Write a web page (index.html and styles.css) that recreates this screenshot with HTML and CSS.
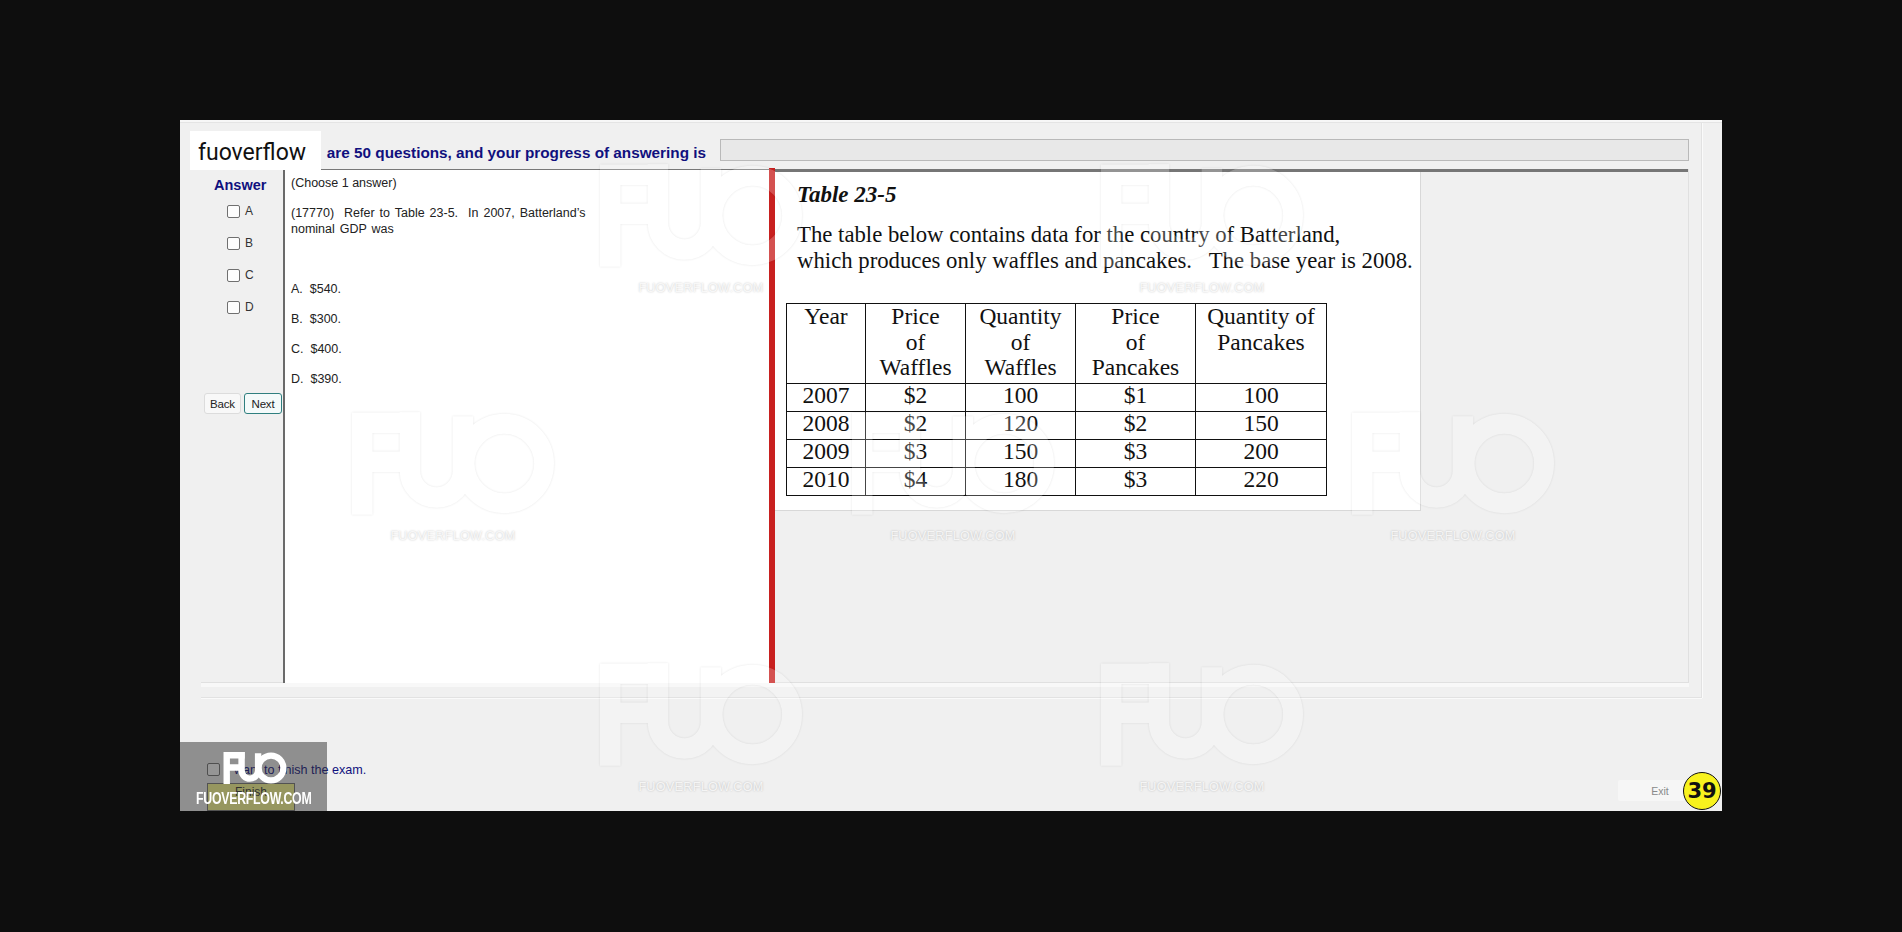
FILE: index.html
```html
<!DOCTYPE html>
<html lang="en">
<head>
<meta charset="utf-8">
<title>Exam</title>
<link rel="stylesheet" href="styles.css">
</head>
<body>
<svg class="defs" width="0" height="0" aria-hidden="true">
  <symbol id="fuo" viewBox="0 0 610 310">
    <g fill="none" stroke="currentColor" stroke-width="62">
      <path d="M31 310V32H205M31 150H175"/>
      <path d="M175 0V178A80 80 0 0 0 335 178V12"/>
      <circle cx="460" cy="155" r="120" stroke-width="60"/>
    </g>
  </symbol>
</svg>
<main class="window">
  <div class="topline"></div>
  <div class="group">
    <div class="progress-row">
      <span class="progress-label">are 50 questions, and your progress of answering is</span>
      <div class="progress-bar"></div>
    </div>
    <div class="main-row">
      <aside class="answers">
        <h2 class="answers-title">Answer</h2>
        <label class="choice"><input type="checkbox"><span>A</span></label>
        <label class="choice"><input type="checkbox"><span>B</span></label>
        <label class="choice"><input type="checkbox"><span>C</span></label>
        <label class="choice"><input type="checkbox"><span>D</span></label>
        <div class="nav">
          <button class="btn">Back</button>
          <button class="btn btn-next">Next</button>
        </div>
      </aside>
      <section class="question">
        <p class="hint">(Choose 1 answer)</p>
        <p class="stem">(17770)&nbsp; Refer to Table 23-5.&nbsp; In 2007, Batterland’s<br>nominal GDP was</p>
        <p class="opt opt-first">A.&nbsp; $540.</p>
        <p class="opt">B.&nbsp; $300.</p>
        <p class="opt">C.&nbsp; $400.</p>
        <p class="opt">D.&nbsp; $390.</p>
      </section>
      <div class="splitter"></div>
      <section class="viewer">
        <div class="sheet">
          <h3 class="sheet-title">Table 23-5</h3>
          <p class="sheet-text">The table below contains data for the country of Batterland,<br>which produces only waffles and pancakes. &nbsp; The base year is 2008.</p>
          <table class="data">
            <colgroup><col class="c1"><col class="c2"><col class="c3"><col class="c4"><col class="c5"></colgroup>
            <tr class="head"><td>Year</td><td>Price<br>of<br>Waffles</td><td>Quantity<br>of<br>Waffles</td><td>Price<br>of<br>Pancakes</td><td>Quantity of<br>Pancakes</td></tr>
            <tr><td>2007</td><td>$2</td><td>100</td><td>$1</td><td>100</td></tr>
            <tr><td>2008</td><td>$2</td><td>120</td><td>$2</td><td>150</td></tr>
            <tr><td>2009</td><td>$3</td><td>150</td><td>$3</td><td>200</td></tr>
            <tr><td>2010</td><td>$4</td><td>180</td><td>$3</td><td>220</td></tr>
          </table>
        </div>
      </section>
    </div>
  </div>
  <footer class="foot">
    <div class="finish">
      <label class="finish-check"><input type="checkbox"><span>I want to finish the exam.</span></label>
      <button class="btn-finish">Finish</button>
    </div>
    <button class="btn-exit">Exit</button>
  </footer>

  <div class="wm wm1"><svg class="wm-logo"><use href="#fuo"/></svg><span>FUOVERFLOW.COM</span></div>
  <div class="wm wm2"><svg class="wm-logo"><use href="#fuo"/></svg><span>FUOVERFLOW.COM</span></div>
  <div class="wm wm3"><svg class="wm-logo"><use href="#fuo"/></svg><span>FUOVERFLOW.COM</span></div>
  <div class="wm wm4"><svg class="wm-logo"><use href="#fuo"/></svg><span>FUOVERFLOW.COM</span></div>
  <div class="wm wm5"><svg class="wm-logo"><use href="#fuo"/></svg><span>FUOVERFLOW.COM</span></div>
  <div class="wm wm6"><svg class="wm-logo"><use href="#fuo"/></svg><span>FUOVERFLOW.COM</span></div>
  <div class="wm wm7"><svg class="wm-logo"><use href="#fuo"/></svg><span>FUOVERFLOW.COM</span></div>

  <div class="brand-tag">fuoverflow</div>
  <div class="brand-box">
    <svg class="brand-logo"><use href="#fuo"/></svg>
    <span class="brand-name">FUOVERFLOW.COM</span>
  </div>
  <div class="page-badge">39</div>
</main>
</body>
</html>
```
FILE: styles.css
```css
* { box-sizing: border-box; }
html, body { margin: 0; height: 100%; }
body {
  background: #0e0e0e;
  padding: 120px 0 0 180px;
  font-family: "Liberation Sans", Arial, sans-serif;
  overflow: hidden;
}
.defs { position: absolute; }
.window {
  position: relative;
  width: 1542px;
  height: 691px;
  background: #f0f0f0;
  overflow: hidden;
}
.topline { height: 3px; border-bottom: 1px solid #e4e4e4; background: #f7f7f7; }

.group {
  margin: 0 20px 0 21px;
  height: 575px;
  padding: 16px 12px 0 0;
  border: solid #e2e2e2;
  border-width: 0 1px 1px 0;
  box-shadow: 0 1px 0 #fafafa, 1px 0 0 #fafafa;
}
.progress-row {
  display: flex;
  align-items: center;
  justify-content: flex-end;
  gap: 14px;
  height: 22px;
}
.progress-label {
  color: #10107e;
  font-size: 15.3px;
  font-weight: bold;
  white-space: nowrap;
  position: relative;
  top: 3px;
}
.progress-bar {
  width: 969px;
  height: 22px;
  background: #e8e8e8;
  border: 1px solid #b9b9b9;
  flex: none;
}
.main-row {
  display: flex;
  margin-top: 8px;
  height: 514px;
  border-right: 1px solid #e0e0e0;
  border-bottom: 1px solid #e0e0e0;
  box-shadow: 0 4px 0 #f8f8f8;
}

.answers {
  width: 82px;
  flex: none;
  display: flex;
  flex-direction: column;
  padding-left: 3px;
}
.answers-title {
  margin: 8px 0 6px 10px;
  color: #10107e;
  font-size: 14.5px;
  line-height: 16px;
  font-weight: bold;
}
.choice {
  display: flex;
  gap: 5px;
  height: 32px;
  margin-left: 23px;
  padding-top: 6px;
  font-size: 12px;
  line-height: 12px;
  color: #333;
}
.choice input, .finish-check input {
  appearance: none;
  width: 13px;
  height: 13px;
  margin: 0;
  background: #fdfdfd;
  border: 1px solid #707070;
  border-radius: 2px;
  flex: none;
}
.nav {
  display: flex;
  gap: 3px;
  margin-top: 66px;
}
.btn {
  width: 37px;
  height: 21px;
  padding: 0;
  font: 11.5px "Liberation Sans", Arial, sans-serif;
  letter-spacing: -.2px;
  color: #222;
  background: #f8f8f8;
  border: 1px solid #dcdcdc;
  border-radius: 3px;
}
.btn-next { width: 38px; background: #f4fafa; border-color: #2f7f7f; }

.question {
  width: 486px;
  flex: none;
  height: 514px;
  background: #fff;
  border-left: 2px solid #6a6a6a;
  border-top: 1px solid #777;
  padding: 5px 0 0 6px;
  font-size: 12.5px;
  line-height: 16px;
  color: #222;
}
.question p { margin: 0; }
.stem { margin-top: 14px !important; word-spacing: 1.5px; }
.opt { margin-top: 14px !important; }
.opt-first { margin-top: 44px !important; }

.splitter { width: 6px; flex: none; height: 515px; margin-top: -1px; background: #c8201f; }
.viewer {
  flex: 1;
  border-top: 3px solid #767676;
}
.sheet {
  width: 646px;
  height: 339px;
  background: #fff;
  padding-top: 10px;
  font-family: "Liberation Serif", "Times New Roman", serif;
  color: #111;
  border-right: 1px solid #d8d8d8;
  border-bottom: 1px solid #d8d8d8;
}
.sheet-title {
  margin: 0 0 0 22px;
  font-size: 23px;
  line-height: 26px;
  font-style: italic;
  font-weight: bold;
}
.sheet-text {
  margin: 14px 0 0 22px;
  font-size: 22.75px;
  line-height: 26px;
  white-space: nowrap;
}
.data {
  margin: 29px 0 0 11px;
  border-collapse: collapse;
  table-layout: fixed;
  width: 540px;
  font-size: 23.5px;
  text-align: center;
}
.c1 { width: 79px; } .c2 { width: 100px; } .c3 { width: 110px; } .c4 { width: 120px; } .c5 { width: 131px; }
.data td { border: 1px solid #111; padding: 0 0 5px; height: 28px; line-height: 22px; white-space: nowrap; }
.data .head td { height: 80px; padding: 0; line-height: 25.5px; vertical-align: top; }

.foot {
  display: flex;
  justify-content: space-between;
  align-items: flex-start;
  padding: 62px 32px 0 27px;
}
.finish { display: flex; flex-direction: column; gap: 5px; }
.finish-check {
  display: flex;
  align-items: center;
  gap: 7px;
  font-size: 12.6px;
  line-height: 15px;
  color: #10107e;
}
.finish-check span { padding-top: 3px; }
.btn-finish {
  width: 88px;
  height: 28px;
  padding: 0 0 11px;
  font: 12px "Liberation Sans", Arial, sans-serif;
  color: #333;
  background: #ffff90;
  border: 1px solid #777;
}
.btn-exit {
  width: 72px;
  height: 21px;
  margin-top: 20px;
  padding: 1px 0 0 12px;
  font: 10.5px "Liberation Sans", Arial, sans-serif;
  color: #8a8a8a;
  background: #f6f6f6;
  border: 0;
  border-radius: 2px;
}

.wm {
  position: absolute;
  width: 202px;
  display: flex;
  flex-direction: column;
  align-items: center;
  pointer-events: none;
}
.wm-logo {
  width: 202px;
  height: 103px;
  color: #fff;
  opacity: .22;
  filter: drop-shadow(0 0 1px rgba(0,0,0,.45));
}
.wm span {
  margin-top: 14px;
  font-size: 12.6px;
  line-height: 14px;
  letter-spacing: .3px;
  color: rgba(255,255,255,.8);
  text-shadow: 0 0 2px rgba(0,0,0,.25);
}
.wm1 { left: 420px; top: 44px; }
.wm2 { left: 921px; top: 44px; }
.wm3 { left: 172px; top: 292px; }
.wm4 { left: 672px; top: 292px; }
.wm5 { left: 1172px; top: 292px; }
.wm6 { left: 420px; top: 543px; }
.wm7 { left: 921px; top: 543px; }

.brand-tag {
  position: absolute;
  left: 10px;
  top: 11px;
  width: 131px;
  height: 39px;
  padding: 5px 0 0 8px;
  background: #fff;
  color: #111;
  font-family: Roboto, sans-serif;
  font-size: 23px;
  line-height: 34px;
}
.brand-box {
  position: absolute;
  left: 0;
  bottom: 0;
  width: 147px;
  height: 69px;
  background: rgba(46,46,46,.5);
  display: flex;
  flex-direction: column;
  align-items: center;
  padding-top: 10px;
}
.brand-logo { width: 64px; height: 32px; color: #fff; margin-left: 3px; }
.brand-name {
  margin-top: 7px;
  color: #fff;
  font-size: 13px;
  line-height: 15px;
  font-weight: bold;
  letter-spacing: -.3px;
  transform: scale(.95, 1.25);
}
.page-badge {
  position: absolute;
  right: 1px;
  bottom: 1px;
  width: 38px;
  height: 38px;
  border-radius: 50%;
  background: #f8f21e;
  border: 1px solid #111;
  color: #111;
  font-family: "DejaVu Sans", sans-serif;
  font-size: 21px;
  font-weight: bold;
  line-height: 36px;
  text-align: center;
}
```
